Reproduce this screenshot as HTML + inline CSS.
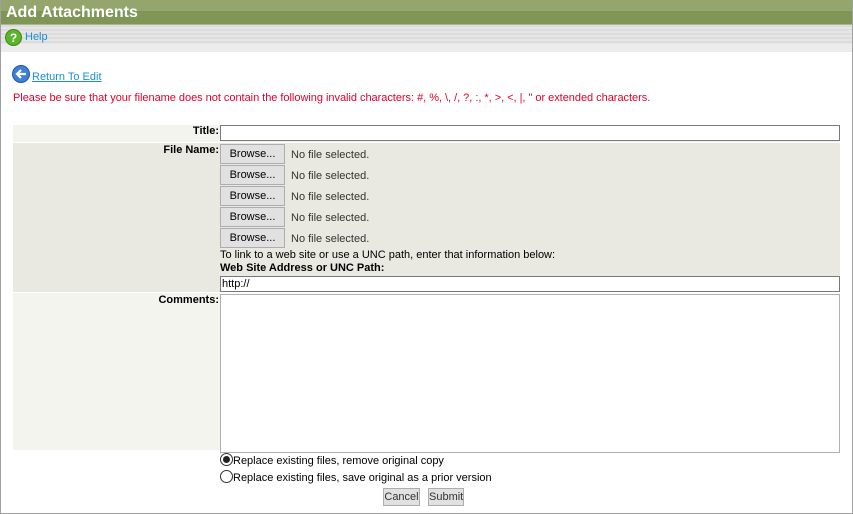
<!DOCTYPE html>
<html><head><style>
*{margin:0;padding:0;box-sizing:border-box}
body{width:853px;height:514px;overflow:hidden;background:#fff;font-family:"Liberation Sans",Arial,sans-serif;font-size:11px;position:relative}
.a{position:absolute}
.frame{left:0;top:0;width:853px;height:514px;border:1px solid #a0a0a0;border-top:none}
.btn{position:absolute;left:220px;width:65px;height:20px;background:#e1e1e1;border:1px solid #adadad;font-size:11px;text-align:center;line-height:18px;color:#000}
.nf{position:absolute;left:291px;color:#333;font-size:11px}
.lbl{position:absolute;right:634px;font-weight:bold;font-size:11px}
.inp{position:absolute;left:220px;width:620px;background:#fff;border:1px solid #7a7a7a}
.sb{position:absolute;height:18px;background:#e1e1e1;border:1px solid #adadad;font-size:11px;line-height:16px;text-align:center;color:#333}
</style></head><body>
<div class="a" style="left:0;top:0;width:853px;height:11px;background:#94a66e"></div>
<div class="a" style="left:0;top:11px;width:853px;height:13px;background:#7f9656"></div>
<div class="a" style="left:0;top:24px;width:853px;height:1px;background:#a9b98a"></div>
<div class="a" style="left:6px;top:4px;color:#fff;font-weight:bold;font-size:16px">Add Attachments</div>
<div class="a" style="left:0;top:25px;width:853px;height:27px;background:repeating-linear-gradient(#dcdcdc 0 2px,#e6e6e6 2px 4px)"></div>
<div class="a" style="left:0;top:44px;width:853px;height:8px;background:#ececec"></div>
<svg class="a" style="left:5px;top:29px" width="17" height="17"><circle cx="8.5" cy="8.5" r="8" fill="#5ab52a" stroke="#3c8a18"/><text x="8.5" y="13" font-size="12" font-weight="bold" fill="#fff" text-anchor="middle" font-family="Liberation Sans">?</text></svg>
<div class="a" style="left:25px;top:31px;color:#1a8fd6;font-size:11px">Help</div>
<svg class="a" style="left:12px;top:65px" width="18" height="18"><circle cx="9" cy="9" r="8.5" fill="#3f7fd6" stroke="#2456a8"/><path d="M14 9H6M9 5L5 9l4 4" stroke="#fff" stroke-width="2.2" fill="none"/></svg>
<div class="a" style="left:32px;top:71px;color:#1a8fd6;text-decoration:underline;font-size:11px">Return To Edit</div>
<div class="a" style="left:13px;top:92px;color:#e0002a;font-size:11px;letter-spacing:-0.03px">Please be sure that your filename does not contain the following invalid characters: #, %, \, /, ?, :, *, &gt;, &lt;, |, " or extended characters.</div>
<div class="a" style="left:13px;top:125px;width:827px;height:17px;background:#f4f4ee"></div>
<div class="a" style="left:13px;top:143px;width:827px;height:149px;background:#e9e9e1"></div>
<div class="a" style="left:13px;top:293px;width:207px;height:157px;background:#f4f4ee"></div>
<div class="lbl" style="top:125px">Title:</div>
<div class="inp" style="top:125px;height:16px"></div>
<div class="lbl" style="top:144px">File Name:</div>
<div class="btn" style="top:144px">Browse...</div><div class="nf" style="top:149px">No file selected.</div>
<div class="btn" style="top:165px">Browse...</div><div class="nf" style="top:170px">No file selected.</div>
<div class="btn" style="top:186px">Browse...</div><div class="nf" style="top:191px">No file selected.</div>
<div class="btn" style="top:207px">Browse...</div><div class="nf" style="top:212px">No file selected.</div>
<div class="btn" style="top:228px">Browse...</div><div class="nf" style="top:233px">No file selected.</div>
<div class="a" style="left:220px;top:249px">To link to a web site or use a UNC path, enter that information below:</div>
<div class="a" style="left:220px;top:262px;font-weight:bold">Web Site Address or UNC Path:</div>
<div class="inp" style="top:276px;height:16px;padding-left:1px;font-size:11px;line-height:14px">http://</div>
<div class="lbl" style="top:294px">Comments:</div>
<div class="inp" style="top:294px;height:159px;border-color:#b0b0b0"></div>
<svg class="a" style="left:220px;top:453px" width="13" height="13"><circle cx="6.5" cy="6.5" r="6" fill="#fff" stroke="#333"/><circle cx="6.5" cy="6.5" r="3.5" fill="#222"/></svg>
<div class="a" style="left:233px;top:455px">Replace existing files, remove original copy</div>
<svg class="a" style="left:220px;top:470px" width="13" height="13"><circle cx="6.5" cy="6.5" r="6" fill="#fff" stroke="#333"/></svg>
<div class="a" style="left:233px;top:472px">Replace existing files, save original as a prior version</div>
<div class="sb" style="left:383px;top:488px;width:37px">Cancel</div>
<div class="sb" style="left:428px;top:488px;width:36px">Submit</div>
<div class="a frame"></div>
</body></html>
